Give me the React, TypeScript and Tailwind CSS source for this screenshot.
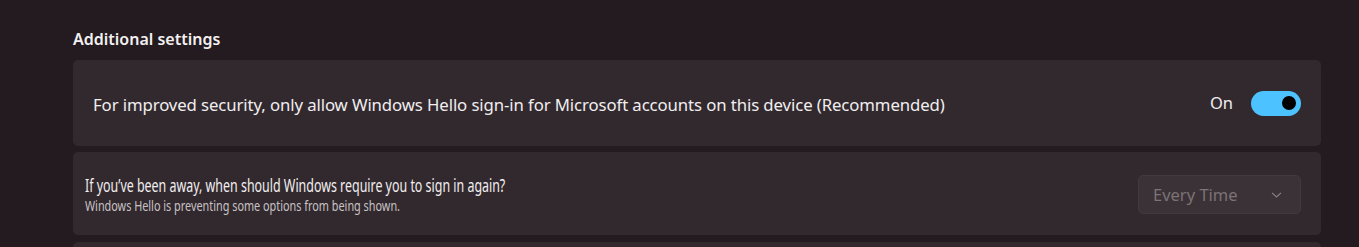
export default function App() {
  return (
    <div
      className="w-[1359px] h-[247px] overflow-hidden bg-[#231b1f] pl-[73px] pr-[38px] pt-[28px] text-white"
      style={{ fontFamily: '"Noto Sans", "Open Sans", sans-serif' }}
    >
      {/* section header */}
      <h2 className="text-[16px] leading-[22px] font-semibold text-[#f3f0f1] h-[32px]">Additional settings</h2>

      <div className="flex flex-col gap-[6px]">
        {/* Windows Hello only */}
        <div className="h-[86px] rounded-[5px] bg-[#31292d] flex items-center justify-between pl-[20px] pr-[20px]">
          <span className="text-[16.75px] text-[#f1eef0] tracking-[-0.1px] pt-[3px]">
            For improved security, only allow Windows Hello sign-in for Microsoft accounts on this device (Recommended)
          </span>
          <div className="flex items-center gap-[18px]">
            <span className="text-[16.5px] text-[#f1eef0]">On</span>
            <div className="w-[50px] h-[25px] rounded-full bg-[#4cc2ff] flex items-center justify-end pr-[5px]">
              <div className="w-[14px] h-[14px] rounded-full bg-black" />
            </div>
          </div>
        </div>

        {/* sign in again */}
        <div className="h-[83px] rounded-[5px] bg-[#31292d] flex items-center justify-between pl-[12px] pr-[20px]">
          <div className="flex flex-col pt-[2px]">
            <span className="text-[18px] leading-[22px] text-[#f1eef0] whitespace-nowrap origin-left scale-x-[0.69]">
              If you’ve been away, when should Windows require you to sign in again?
            </span>
            <span className="text-[14px] leading-[19px] text-[#c9c2c5] whitespace-nowrap origin-left scale-x-[0.775]">
              Windows Hello is preventing some options from being shown.
            </span>
          </div>
          <div className="mt-[2px] w-[163px] h-[39px] rounded-[5px] bg-[#3a3236] border border-[#41393d] flex items-center justify-between pl-[14px] pr-[18px]">
            <span className="text-[16.5px] text-[#7c7277] pt-[2px]">Every Time</span>
            <svg width="11" height="6" viewBox="0 0 11 6" fill="none">
              <path d="M1 0.8 L5.5 5 L10 0.8" stroke="#8a8085" strokeWidth="1.1" />
            </svg>
          </div>
        </div>

        <div className="mt-[1px] h-[40px] rounded-[5px] bg-[#31292d]" />
      </div>
    </div>
  );
}
